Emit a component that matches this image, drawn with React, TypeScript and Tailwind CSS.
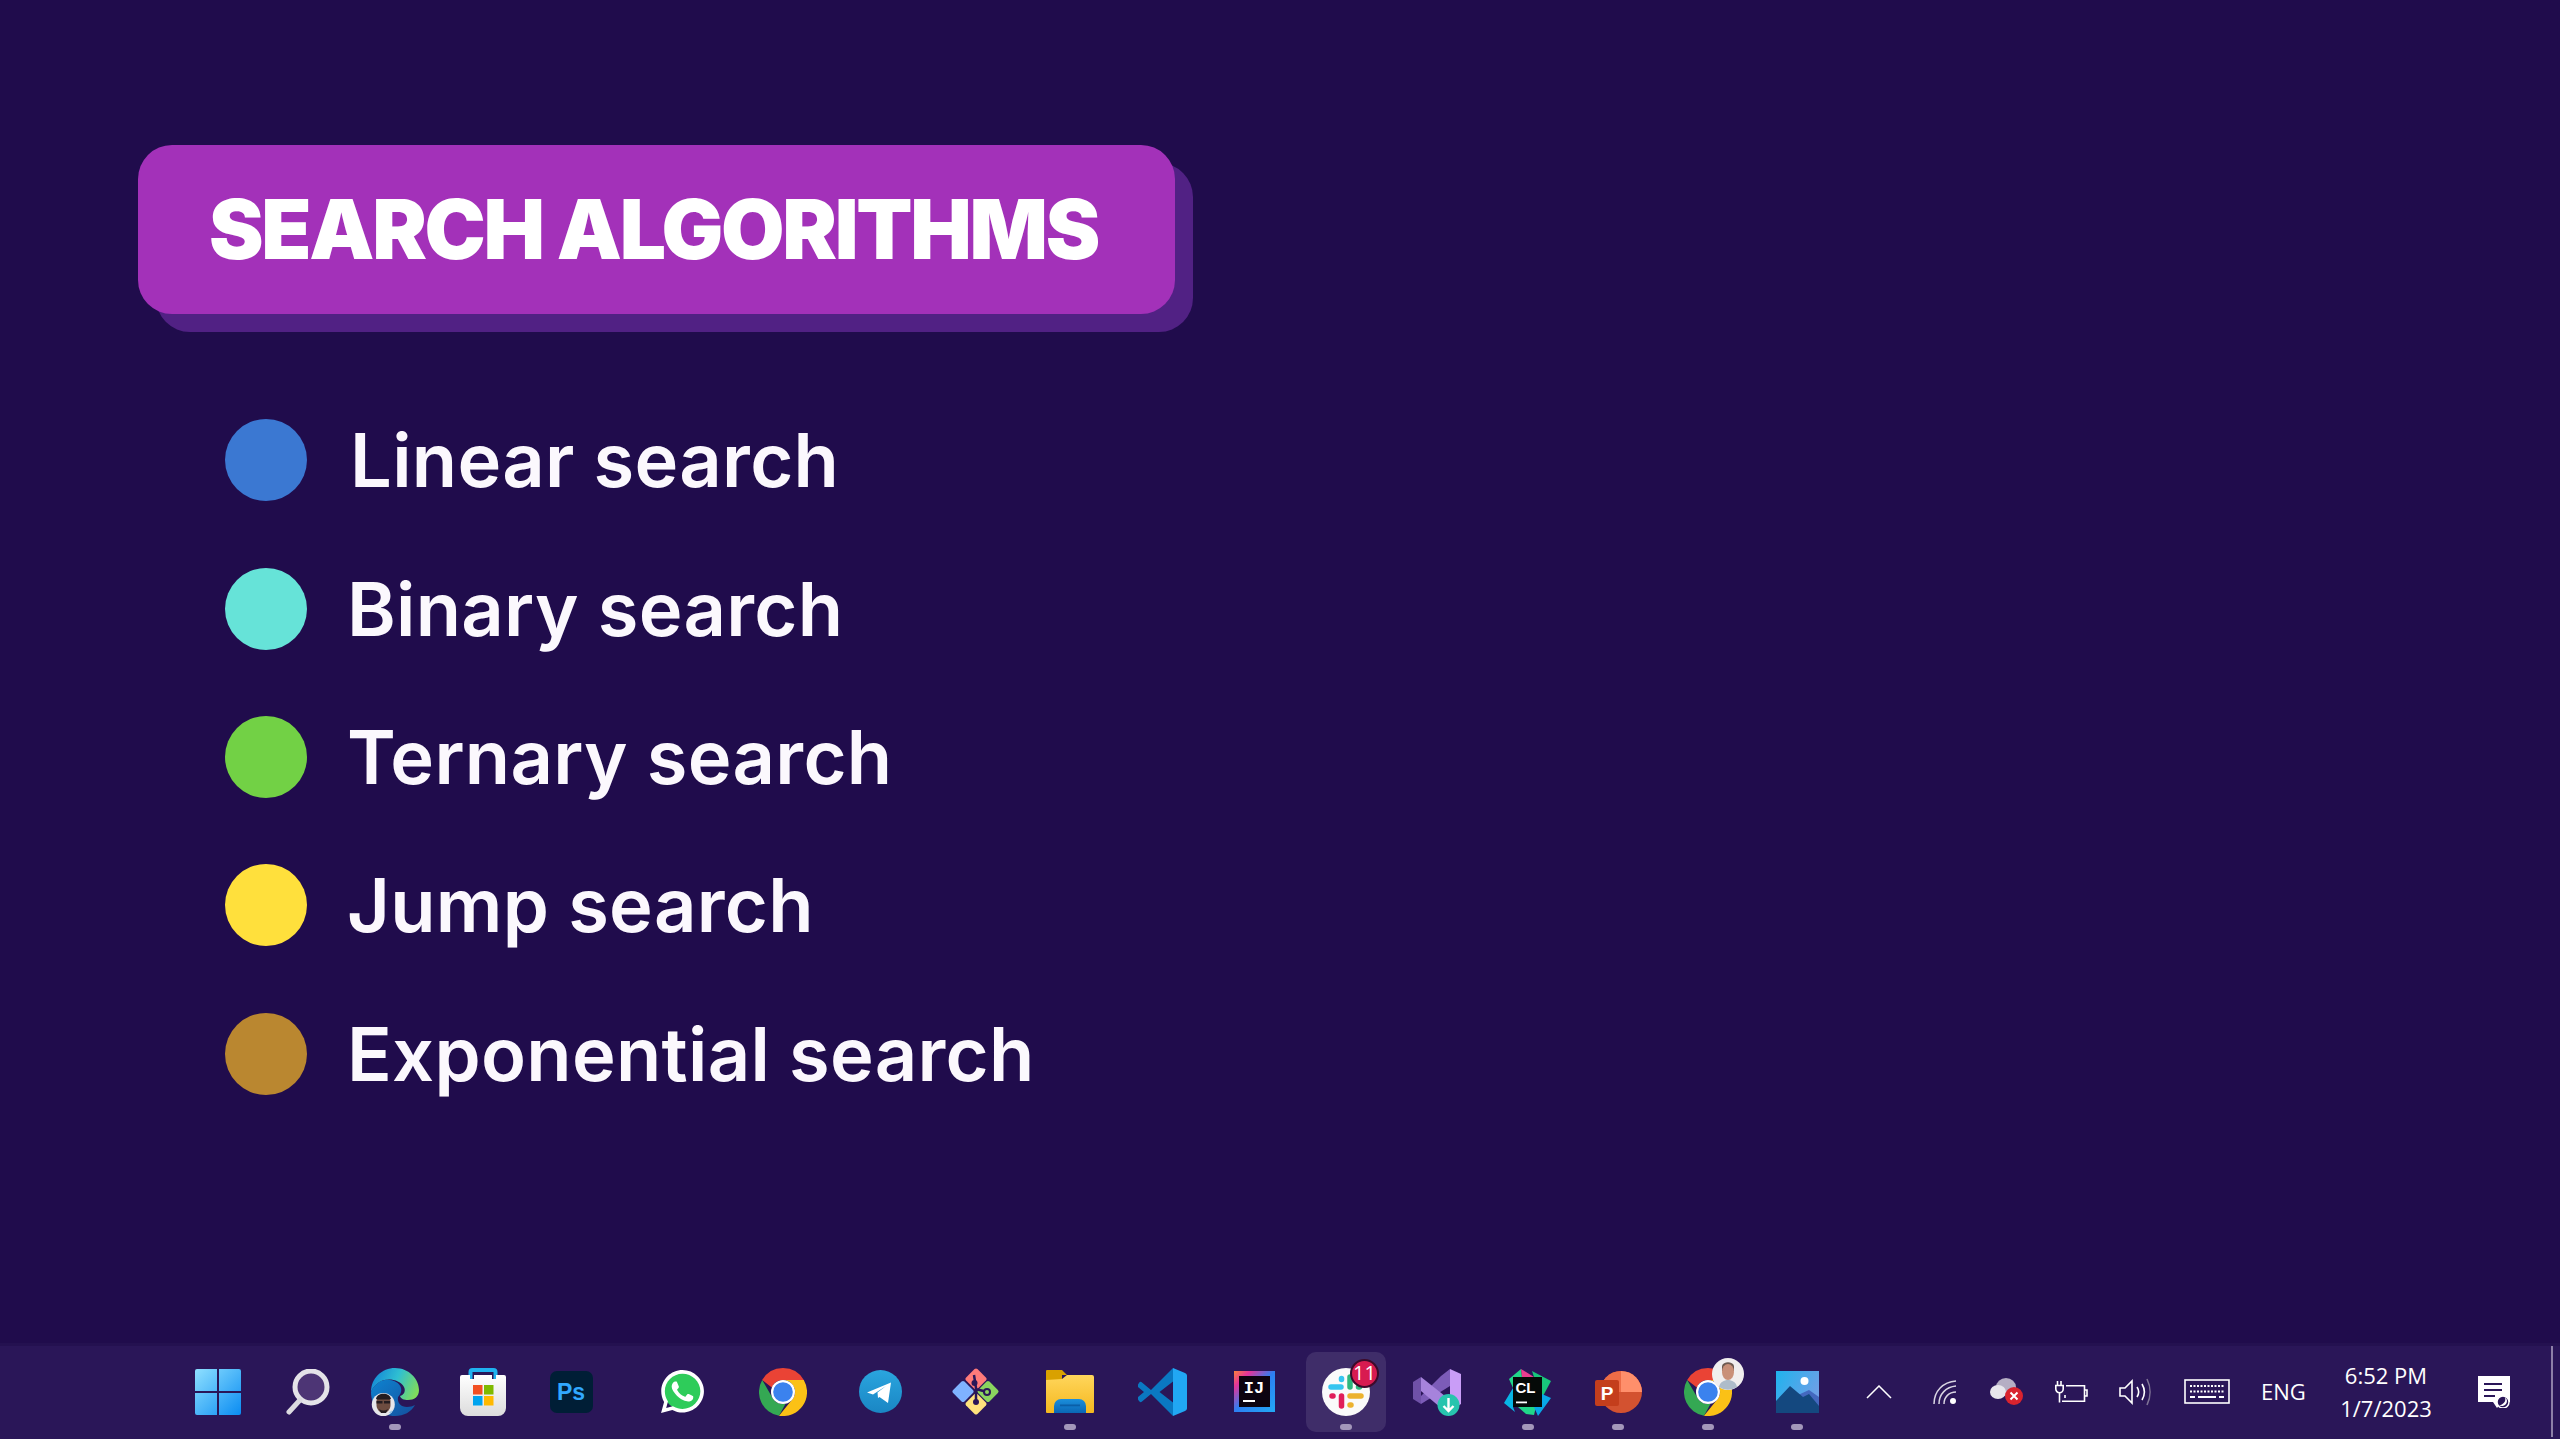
import React from 'react';
import { FaWhatsapp } from 'react-icons/fa';

const searches = [
  { label: 'Linear search', color: 'bg-[#3b78d2]', inset: 'ml-[43px]' },
  { label: 'Binary search', color: 'bg-[#66e3d8]', inset: 'ml-[40px]' },
  { label: 'Ternary search', color: 'bg-[#72d145]', inset: 'ml-[40px]' },
  { label: 'Jump search', color: 'bg-[#ffe03c]', inset: 'ml-[40px]' },
  { label: 'Exponential search', color: 'bg-[#ba8730]', inset: 'ml-[40px]' },
];

function WindowsIcon() {
  return (
    <svg width="46" height="46" viewBox="0 0 46 46">
      <defs>
        <linearGradient id="win" x1="0" y1="0" x2="1" y2="1">
          <stop offset="0" stopColor="#8fe0ff" />
          <stop offset="1" stopColor="#0a8cf2" />
        </linearGradient>
      </defs>
      <path fill="url(#win)" d="M2 0h20v22H0V2a2 2 0 0 1 2-2zM24 0h20a2 2 0 0 1 2 2v20H24zM0 24h22v22H2a2 2 0 0 1-2-2zM24 24h22v20a2 2 0 0 1-2 2H24z" />
    </svg>
  );
}

function SearchIcon() {
  return (
    <svg width="46" height="46" viewBox="0 0 46 46">
      <circle cx="26" cy="18" r="16" fill="#4d3575" stroke="#e4e3e8" strokeWidth="5" />
      <path d="M15 31 4 43" stroke="#dcdbe0" strokeWidth="5" strokeLinecap="round" />
    </svg>
  );
}

function EdgeIcon() {
  return (
    <svg width="48" height="48" viewBox="0 0 48 48">
      <defs>
        <linearGradient id="edgeTop" x1="0" y1="0.3" x2="1" y2="0.6">
          <stop offset="0" stopColor="#1487d6" />
          <stop offset="0.5" stopColor="#2fbfd2" />
          <stop offset="1" stopColor="#7fdc5c" />
        </linearGradient>
        <linearGradient id="edgeLow" x1="0" y1="0" x2="1" y2="1">
          <stop offset="0" stopColor="#0e83d0" />
          <stop offset="1" stopColor="#14509e" />
        </linearGradient>
      </defs>
      <path fill="url(#edgeLow)" d="M7 15C14 9 28 12 30 20 31 24 29 27 27 29 26 35 30 39 36 39 39 39 42 38 44 37 40 44 33 48 24 48 10 48 0 38 0 24 1 21 3 18 7 15z" />
      <path fill="url(#edgeTop)" d="M0 24C0 10 11 0 24 0 38 0 48 11 48 22 48 29 43 32 37 32 33 32 30 31 29 28 33 27 35 23 33 19 29 11 14 9 7 15 3 18 1 21 0 24z" />
      <circle cx="12.300" cy="36.500" r="11.500" fill="#e6e6ea" />
      <path fill="#6d4c40" d="M5.500 33c0-7 14-7 14 0v4c0 4-3 8-7 8s-7-4-7-8z" />
      <path fill="#241c20" d="M5 31c1-7 14-7 15 0l-2 .5H7zM5.500 33h6v2.500h-6zM13 33h6v2.500h-6zM8 41c3 2 6 2 9 0l-2 4h-5z" />
      <path fill="#8cc3e8" d="M18 44.500c2-1 4-3 5-5l-1 1-2 5z" />
    </svg>
  );
}

function StoreIcon() {
  return (
    <svg width="46" height="48" viewBox="0 0 46 48">
      <defs>
        <linearGradient id="bag" x1="0" y1="0" x2="0" y2="1">
          <stop offset="0" stopColor="#ffffff" />
          <stop offset="1" stopColor="#dcdcdc" />
        </linearGradient>
      </defs>
      <path d="M10.500 11V4a2 2 0 0 1 2-2h21a2 2 0 0 1 2 2v7" fill="none" stroke="#1fb2f0" strokeWidth="4" />
      <path fill="url(#bag)" d="M0 9a2 2 0 0 1 2-2h8v4h4V7h18v4h4V7h8a2 2 0 0 1 2 2v31a8 8 0 0 1-8 8H8a8 8 0 0 1-8-8z" />
      <rect x="13" y="17" width="9.500" height="9.500" fill="#f25022" />
      <rect x="24" y="17" width="9.500" height="9.500" fill="#7fba00" />
      <rect x="13" y="28" width="9.500" height="9.500" fill="#00a4ef" />
      <rect x="24" y="28" width="9.500" height="9.500" fill="#ffb900" />
    </svg>
  );
}

function PhotoshopIcon() {
  return (
    <svg width="43" height="42" viewBox="0 0 43 42">
      <rect width="43" height="42" rx="7" fill="#001e36" />
      <text x="21" y="29" textAnchor="middle" fontFamily="'Liberation Sans', sans-serif" fontWeight="700" fontSize="23" fill="#31a8ff">Ps</text>
    </svg>
  );
}

function WhatsAppIcon() {
  return (
    <div className="relative flex h-[49px] w-[49px] items-center justify-center">
      <div className="absolute left-[6px] top-[6px] h-[37px] w-[37px] rounded-full bg-[#2ecc5a]" />
      <FaWhatsapp className="absolute inset-0 h-[49px] w-[49px] text-white" />
    </div>
  );
}

function ChromeIcon() {
  return (
    <svg width="48" height="48" viewBox="0 0 48 48">
      <path fill="#ea4335" d="M24 0a24 24 0 0 1 20.8 12H24a12 12 0 0 0-11.2 7.5L3.2 12A24 24 0 0 1 24 0z" />
      <path fill="#34a853" d="M3.2 12 13.6 30a12 12 0 0 0 10.4 6 12 12 0 0 0 2.6-.3L20 47.7A24 24 0 0 1 3.2 12z" />
      <path fill="#fbc116" d="M44.800 12A24 24 0 0 1 20 47.700L34.400 30A12 12 0 0 0 34.400 18 12 12 0 0 0 24 12z" />
      <circle cx="24" cy="24" r="12" fill="#ffffff" />
      <circle cx="24" cy="24" r="9.800" fill="#3b82ee" />
    </svg>
  );
}

function TelegramIcon() {
  return (
    <svg width="43" height="43" viewBox="0 0 43 43">
      <defs>
        <linearGradient id="tg" x1="0" y1="0" x2="0" y2="1">
          <stop offset="0" stopColor="#2aa5de" />
          <stop offset="1" stopColor="#1a86c4" />
        </linearGradient>
      </defs>
      <circle cx="21.500" cy="21.500" r="21.500" fill="url(#tg)" />
      <path fill="#ffffff" d="M8 22.500 32 12.500 29 33l-8.500-6-1.500 1-.5-5.500L27 16 14 24.500z" />
    </svg>
  );
}

function GitIcon() {
  return (
    <svg width="48" height="48" viewBox="0 0 48 48">
      <rect x="-8" y="-8" width="16" height="16" rx="2" transform="translate(24 11) rotate(45)" fill="#ff7a7a" />
      <rect x="-8" y="-8" width="16" height="16" rx="2" transform="translate(36 23.500) rotate(45)" fill="#8ad45f" />
      <rect x="-8" y="-8" width="16" height="16" rx="2" transform="translate(24 36) rotate(45)" fill="#ffe27d" />
      <rect x="-8" y="-8" width="16" height="16" rx="2" transform="translate(11 23.500) rotate(45)" fill="#7fb2ff" />
      <path d="M22 7 24 20V34M24 21l11 3" fill="none" stroke="#2a1658" strokeWidth="2.500" />
      <circle cx="22.500" cy="15" r="3" fill="#2a1658" />
      <circle cx="35" cy="24" r="3" fill="#8ad45f" stroke="#2a1658" strokeWidth="2" />
      <circle cx="24" cy="34" r="3" fill="#2a1658" />
    </svg>
  );
}

function FolderIcon() {
  return (
    <svg width="48" height="43" viewBox="0 0 48 43">
      <defs>
        <linearGradient id="folder" x1="0" y1="0" x2="0" y2="1">
          <stop offset="0" stopColor="#ffd65c" />
          <stop offset="1" stopColor="#f5b81f" />
        </linearGradient>
        <linearGradient id="folderTab" x1="0" y1="0" x2="0" y2="1">
          <stop offset="0" stopColor="#1b8fdc" />
          <stop offset="1" stopColor="#0a66b5" />
        </linearGradient>
      </defs>
      <path fill="#d9a100" d="M1 0h15l5 5h-5v6H0V1a1 1 0 0 1 1-1z" />
      <path fill="url(#folder)" d="M0 10l16-1 5-4h25a2 2 0 0 1 2 2v35a1 1 0 0 1-1 1H1a1 1 0 0 1-1-1z" />
      <path fill="url(#folderTab)" d="M8 43v-7a7 7 0 0 1 7-7h18a7 7 0 0 1 7 7v7z" />
      <rect x="14" y="34.500" width="20" height="1.800" fill="#0a5fa8" />
    </svg>
  );
}

function VSCodeIcon() {
  return (
    <svg width="49" height="48" viewBox="0 0 49 48">
      <path fill="#0a78c2" d="M35 0 13 22 4 14.500a2 2 0 0 0-3 .5L0 16.500a2 2 0 0 0 0 2.500L6 24 0 29a2 2 0 0 0 0 2.500L1 33a2 2 0 0 0 3 .5L13 26l22 22 2-24-2-24z" />
      <path fill="#21a7f3" d="M35 0l12 5a3 3 0 0 1 2 3v32a3 3 0 0 1-2 3l-12 5z" />
      <path fill="#2a1658" d="M35 13.500 21.500 24 35 34.500z" />
    </svg>
  );
}

function IntelliJIcon() {
  return (
    <svg width="41" height="41" viewBox="0 0 41 41">
      <defs>
        <linearGradient id="ij" x1="0" y1="0" x2="1" y2="1">
          <stop offset="0" stopColor="#f9823a" />
          <stop offset="0.2" stopColor="#e5339a" />
          <stop offset="0.5" stopColor="#2d7ff2" />
          <stop offset="1" stopColor="#22a9f5" />
        </linearGradient>
      </defs>
      <rect width="41" height="41" fill="url(#ij)" />
      <rect x="5" y="5" width="31" height="31" fill="#0c0310" />
      <text x="20" y="22" textAnchor="middle" fontFamily="'Liberation Mono', monospace" fontWeight="700" fontSize="17" fill="#ffffff">IJ</text>
      <rect x="9" y="29" width="12" height="2" fill="#ffffff" />
    </svg>
  );
}

function SlackIcon() {
  return (
    <svg width="48" height="48" viewBox="0 0 48 48">
      <circle cx="24" cy="24" r="24" fill="#fafafa" />
      <path stroke="#36c5f0" strokeWidth="5.500" strokeLinecap="round" d="M9 19h10" />
      <path stroke="#36c5f0" strokeWidth="5.500" strokeLinecap="round" d="M19.500 10.500v1" />
      <path stroke="#2eb67d" strokeWidth="5.500" strokeLinecap="round" d="M28 9v10" />
      <path stroke="#2eb67d" strokeWidth="5.500" strokeLinecap="round" d="M36.500 19h1" />
      <path stroke="#ecb22e" strokeWidth="5.500" strokeLinecap="round" d="M28 28h11" />
      <path stroke="#ecb22e" strokeWidth="5.500" strokeLinecap="round" d="M28 37h1" />
      <path stroke="#e01e5a" strokeWidth="5.500" strokeLinecap="round" d="M19.500 28v10" />
      <path stroke="#e01e5a" strokeWidth="5.500" strokeLinecap="round" d="M10 28h1" />
    </svg>
  );
}

function VisualStudioIcon() {
  return (
    <svg width="48" height="48" viewBox="0 0 48 48">
      <path fill="#6f51a8" d="M0 14 8 9V36L0 31z" />
      <path fill="#7c5cb8" d="M8 28 28 8 37 1V18L8 36z" />
      <path fill="#a683dc" d="M8 9 37 32V44L28 40 8 23z" />
      <path fill="#c99df7" d="M37 1 48 6V36L37 43z" />
      <circle cx="35.500" cy="37" r="11" fill="#27c4ae" />
      <path d="M35.500 30v13M30.500 38l5 5 5-5" fill="none" stroke="#ffffff" strokeWidth="2.400" />
    </svg>
  );
}

function CLionIcon() {
  return (
    <svg width="48" height="48" viewBox="0 0 48 48">
      <path fill="#21d789" d="M5 11 17 1 18 9 9 20z" />
      <path fill="#ea3d8f" d="M17 1 30 9H18z" />
      <path fill="#18c77b" d="M28 3 47 13 38 30 30 9z" />
      <path fill="#08b5e5" d="M0 35 9 20V39L11 44z" />
      <path fill="#21d789" d="M14 39H32L30 47 22 46z" />
      <path fill="#08a8e8" d="M38 26 47 30 34 48 30 39H38z" />
      <rect x="9" y="9" width="29" height="30" fill="#050a08" />
      <text x="11.500" y="25" fontFamily="'Liberation Sans', sans-serif" fontWeight="700" fontSize="15" fill="#ffffff">CL</text>
      <rect x="12" y="33.500" width="11" height="1.800" fill="#ffffff" />
    </svg>
  );
}

function PowerPointIcon() {
  return (
    <svg width="47" height="42" viewBox="0 0 47 42">
      <circle cx="26" cy="21" r="21" fill="#d35230" />
      <path fill="#ff8f6b" d="M26 0a21 21 0 0 1 21 21H26z" />
      <path fill="#ed6c47" d="M26 0v21H5A21 21 0 0 1 26 0z" />
      <rect y="9" width="24" height="26" rx="2" fill="#c43e1c" />
      <text x="12" y="29" textAnchor="middle" fontFamily="'Liberation Sans', sans-serif" fontWeight="700" fontSize="19" fill="#ffffff">P</text>
    </svg>
  );
}

function PhotosIcon() {
  return (
    <svg width="43" height="42" viewBox="0 0 43 42">
      <defs>
        <linearGradient id="sky" x1="0" y1="0" x2="1" y2="0.500">
          <stop offset="0" stopColor="#1fb3ee" />
          <stop offset="1" stopColor="#6f9fe6" />
        </linearGradient>
      </defs>
      <rect width="43" height="42" fill="url(#sky)" />
      <circle cx="28.500" cy="10" r="4" fill="#ffffff" />
      <path fill="#4468bf" d="M22 24 33 19l10 7v16H22z" />
      <path fill="#14487f" d="M0 30 14 15l13 11 6-3 10 12v7H0z" />
    </svg>
  );
}

function AvatarBubble() {
  return (
    <svg width="32" height="32" viewBox="0 0 32 32">
      <circle cx="16" cy="16" r="16" fill="#f0eeee" />
      <path fill="#6d5a50" d="M10 8c1-5 11-5 12 0v5H10z" />
      <ellipse cx="16" cy="14" rx="6" ry="8" fill="#c99078" />
      <path fill="#aebcca" d="M7 29c1-5 5-7 9-7s8 2 9 7a16 16 0 0 1-18 0z" />
    </svg>
  );
}

function SlackBadge() {
  return (
    <div className="flex h-[29px] w-[29px] items-center justify-center rounded-full border-2 border-[#3d0a2a] bg-[#d81b50] font-['Open_Sans',sans-serif] text-[20px] text-white">
      11
    </div>
  );
}

const apps = [
  { id: 'start', icon: <WindowsIcon />, space: '' },
  { id: 'search', icon: <SearchIcon />, space: 'ml-[10px]' },
  { id: 'edge', icon: <EdgeIcon />, space: 'ml-[7px]', running: true },
  { id: 'store', icon: <StoreIcon />, space: 'ml-[8px]' },
  { id: 'photoshop', icon: <PhotoshopIcon />, space: 'ml-[8px]' },
  { id: 'whatsapp', icon: <WhatsAppIcon />, space: 'ml-[31px]' },
  { id: 'chrome', icon: <ChromeIcon />, space: 'ml-[21px]' },
  { id: 'telegram', icon: <TelegramIcon />, space: 'ml-[17px]' },
  { id: 'git', icon: <GitIcon />, space: 'ml-[16px]' },
  { id: 'files', icon: <FolderIcon />, space: 'ml-[14px]', running: true },
  { id: 'vscode', icon: <VSCodeIcon />, space: 'ml-[12px]' },
  { id: 'intellij', icon: <IntelliJIcon />, space: 'ml-[12px]' },
  { id: 'slack', icon: <SlackIcon />, space: 'ml-[12px]', running: true, active: true },
  { id: 'vs', icon: <VisualStudioIcon />, space: 'ml-[11px]' },
  { id: 'clion', icon: <CLionIcon />, space: 'ml-[11px]', running: true },
  { id: 'ppt', icon: <PowerPointIcon />, space: 'ml-[10px]', running: true },
  { id: 'chrome2', icon: <ChromeIcon />, space: 'ml-[10px]', running: true },
  { id: 'photos', icon: <PhotosIcon />, space: 'ml-[9px]', running: true },
];

function TaskbarApp({ app }: { app: (typeof apps)[number] }) {
  return (
    <div className={`relative flex h-[80px] w-[80px] items-center justify-center rounded-[10px] ${app.space} ${app.active ? 'bg-white/10' : ''}`}>
      {app.icon}
      {app.running && <span className="absolute bottom-[2px] left-[34px] h-[6px] w-[12px] rounded-full bg-[#a397ba]" />}
      {app.id === 'slack' && (
        <div className="absolute left-[44px] top-[7px]">
          <SlackBadge />
        </div>
      )}
      {app.id === 'chrome2' && (
        <div className="absolute left-[44px] top-[6px]">
          <AvatarBubble />
        </div>
      )}
    </div>
  );
}

function TrayIcons() {
  return (
    <>
      <svg className="ml-[29px]" width="26" height="14" viewBox="0 0 26 14">
        <path d="M1 13 13 1l12 12" fill="none" stroke="#ffffff" strokeWidth="1.500" />
      </svg>
      <svg className="ml-[41px]" width="24" height="24" viewBox="0 0 24 24">
        <path d="M1 24C1 11 10 2 23 1M6 24C6 14 13 7 23 6M11 24c0-7 5-12 12-12" fill="none" stroke="#d9d5e3" strokeWidth="1.500" />
        <circle cx="20" cy="21" r="3" fill="#ffffff" />
      </svg>
      <svg className="ml-[33px]" width="33" height="27" viewBox="0 0 33 27">
        <ellipse cx="16" cy="9" rx="10" ry="9" fill="#b5aec4" />
        <ellipse cx="8" cy="14" rx="8" ry="7" fill="#e8e6ec" />
        <circle cx="24" cy="18" r="9" fill="#d9232e" />
        <path d="M20.500 14.500l7 7M27.500 14.500l-7 7" stroke="#ffffff" strokeWidth="2" />
      </svg>
      <svg className="ml-[32px]" width="33" height="22" viewBox="0 0 33 22">
        <path d="M2.500 0v4.500M6 0v4.500M.800 4.500h7.400v3.500a3.700 3.700 0 0 1-7.400 0zM4.500 12v9.500M11 4.700h18.500V20.200H7M10 14v3M30 9h2v6h-2" fill="none" stroke="#ffffff" strokeWidth="1.600" />
      </svg>
      <svg className="ml-[31px]" width="32" height="28" viewBox="0 0 32 28">
        <path d="M1 10h5l7-7v22l-7-7H1z" fill="none" stroke="#ffffff" strokeWidth="1.600" />
        <path d="M18 9c2 3 2 7 0 10M23 6c3 5 3 11 0 16" fill="none" stroke="#ffffff" strokeWidth="1.600" />
        <path d="M28 1c4 8 4 18 0 26" fill="none" stroke="#7f7396" strokeWidth="1.600" />
      </svg>
      <svg className="ml-[33px]" width="46" height="25" viewBox="0 0 46 25">
        <rect x="1" y="1" width="44" height="23" fill="none" stroke="#ffffff" strokeWidth="1.600" />
        <path d="M6 7h34M6 12.500h34" stroke="#ffffff" strokeWidth="2" strokeDasharray="2 1.500" />
        <path d="M6 18h5M14 18h18M35 18h5" stroke="#ffffff" strokeWidth="2" />
      </svg>
    </>
  );
}

function NotificationIcon() {
  return (
    <svg width="32" height="32" viewBox="0 0 32 32">
      <path fill="#ffffff" d="M0 0h32v26H24l-5 6-4-6H0z" />
      <path d="M6 8h18M6 14h18M6 20h11" stroke="#2a1658" strokeWidth="2" />
      <circle cx="25" cy="26" r="6" fill="#2a1658" stroke="#ffffff" strokeWidth="1.500" />
      <path d="M27 21a6 6 0 0 1-6 8 5 5 0 0 0 6-8z" fill="#ffffff" />
    </svg>
  );
}

export default function App() {
  return (
    <div className="flex h-screen flex-col overflow-hidden bg-[#200c4c]">
      <main className="flex-1 pl-[138px] pt-[145px]">
        <div className="flex h-[169px] w-[1037px] items-center rounded-[34px] bg-[#a331b9] pl-[71px] shadow-[18px_18px_0_0_#512184]">
          <h1 className="font-['Inter',sans-serif] text-[82px] font-black leading-none tracking-[-2.3px] text-white">
            SEARCH ALGORITHMS
          </h1>
        </div>
        <ul className="ml-[87px] mt-[72px] flex flex-col">
          {searches.map((item) => (
            <li key={item.label} className="flex h-[148.4px] items-center">
              <span className={`h-[82px] w-[82px] rounded-full ${item.color}`} />
              <span className={`font-['Inter',sans-serif] text-[74px] font-semibold leading-none tracking-[0.3px] text-[#fbf8fd] ${item.inset}`}>
                {item.label}
              </span>
            </li>
          ))}
        </ul>
      </main>
      <footer className="flex h-[96px] items-center border-t-[3px] border-[#241150] bg-[#2a1658] pl-[178px] pb-[2px]">
        {apps.map((app) => (
          <TaskbarApp key={app.id} app={app} />
        ))}
        <TrayIcons />
        <span className="ml-[31px] w-[45px] font-['Open_Sans',sans-serif] text-[22px] text-white">ENG</span>
        <div className="ml-[30px] w-[100px] text-center font-['Open_Sans',sans-serif] text-[22px] leading-[33px] text-white">
          <div>6:52 PM</div>
          <div>1/7/2023</div>
        </div>
        <div className="ml-[42px]">
          <NotificationIcon />
        </div>
        <div className="ml-[41px] h-full w-[2px] self-stretch bg-[#8d80a8]" />
      </footer>
    </div>
  );
}
